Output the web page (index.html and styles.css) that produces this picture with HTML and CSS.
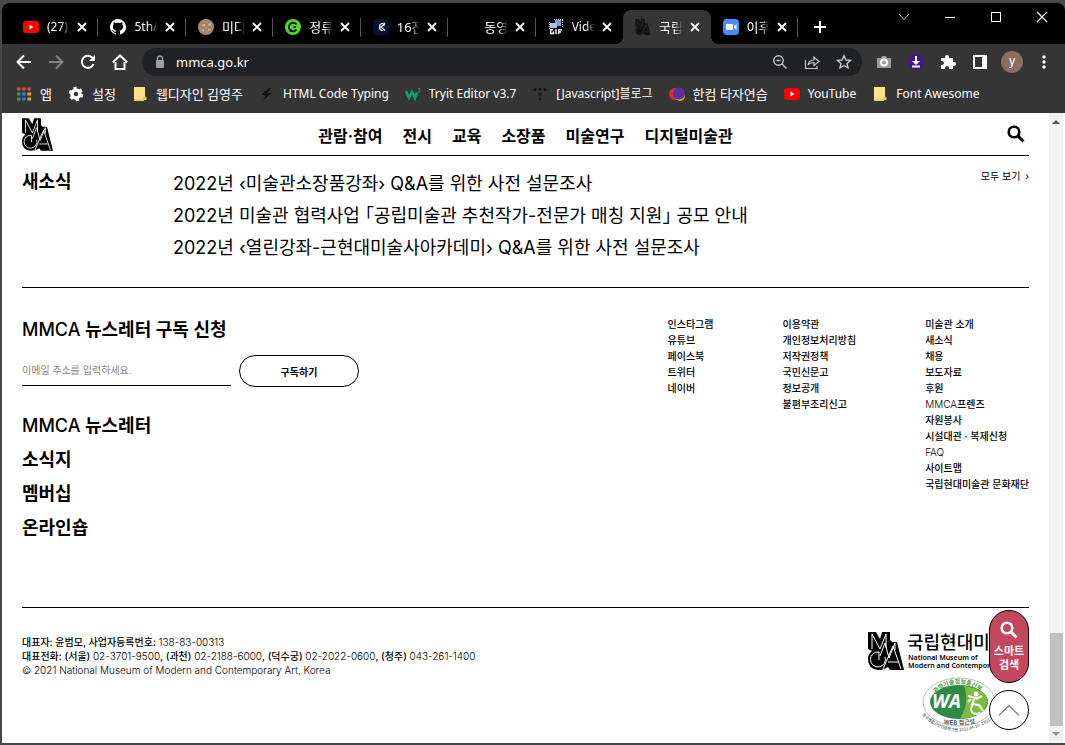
FILE: index.html
```
<!DOCTYPE html>
<html lang="ko">
<head>
<meta charset="utf-8">
<title>국립현대미술관</title>
<link rel="stylesheet" href="styles.css">
</head>
<body>
<svg class="defs" aria-hidden="true">
  <symbol id="mmca" viewBox="0 0 36 38">
    <g fill="none" stroke-linejoin="miter">
      <path d="M0 0H8L12 7L14 0H22V8L24 10H29L36 38H22L20 35Q16 38 10 38Q0 37 0 27Q0 22 4 19L0 17Z" fill="currentColor"/>
      <g class="mmca-lines" stroke-width="1">
        <path d="M4 17V2L12 17L18 2V16"/>
        <path d="M12 24L17 11L21 26L27 11V18"/>
        <path d="M17 25A7.500 7.500 0 1 1 11 20V28"/>
        <path d="M15 37L25 14L33 37M20 30H30"/>
      </g>
    </g>
  </symbol>
  <symbol id="youtube" viewBox="0 0 16 16"><rect y="2" width="16" height="12" rx="3" fill="#f00"/><path d="M6.500 5.500V10.500L10.500 8Z" fill="#fff"/></symbol>
  <symbol id="folder" viewBox="0 0 16 16"><path d="M2 1H13V11L14 12V14H12V15H2Z" fill="#ffe28a"/><path d="M2 14H12V11H14V14" fill="none" stroke="#e5b93c"/></symbol>
  <symbol id="close" viewBox="0 0 16 16"><path d="M4 4L12 12M12 4L4 12" stroke="#fff" stroke-width="1.800"/></symbol>
  <symbol id="magnifier" viewBox="0 0 18 18"><circle cx="7" cy="7" r="5.300" fill="none" stroke="currentColor" stroke-width="2.600"/><path d="M11 11L16.500 16.500" stroke="currentColor" stroke-width="3"/></symbol>
</svg>

<div class="window">
  <header class="tabstrip">
    <nav class="tabs" aria-label="탭">
      <div class="tab"><svg class="icon"><use href="#youtube"/></svg><span class="tab-title">(27)&nbsp;YouTube</span><button class="tab-close" aria-label="닫기"><svg class="icon"><use href="#close"/></svg></button></div>
      <div class="tab"><svg class="icon" viewBox="0 0 16 16"><path fill="#fff" d="M8 0a8 8 0 0 0-2.500 15.600c.4.100.5-.2.500-.4v-1.400c-2.200.5-2.700-1-2.700-1-.4-.9-.9-1.200-.9-1.200-.7-.5.100-.5.100-.5.800.1 1.200.8 1.200.8.700 1.300 1.900.9 2.300.7.100-.5.300-.9.500-1.100-1.800-.2-3.600-.9-3.600-4 0-.9.300-1.600.8-2.100-.1-.2-.4-1 .1-2.100 0 0 .7-.2 2.200.8a7.500 7.500 0 0 1 4 0c1.500-1 2.200-.8 2.200-.8.400 1.100.2 1.900.1 2.100.5.600.8 1.300.8 2.100 0 3.100-1.900 3.800-3.700 4 .3.300.6.800.6 1.500v2.200c0 .2.100.5.500.4A8 8 0 0 0 8 0Z"/></svg><span class="tab-title">5th/inte</span><button class="tab-close" aria-label="닫기"><svg class="icon"><use href="#close"/></svg></button></div>
      <div class="tab"><svg class="icon" viewBox="0 0 16 16"><circle cx="8" cy="8" r="8" fill="#a68b72"/><path d="M3 6Q8 2 8 7Q4 9 3 6M9 6Q13 1 14 5Q12 9 9 6M3 11Q7 7 7 12Q5 15 3 11M9 10Q14 7 13 12Q10 14 9 10" fill="#cbb59b" stroke="#80664f" stroke-width=".6"/></svg><span class="tab-title ko">미디어쿼리</span><button class="tab-close" aria-label="닫기"><svg class="icon"><use href="#close"/></svg></button></div>
      <div class="tab"><svg class="icon" viewBox="0 0 16 16"><circle cx="8" cy="8" r="8" fill="#58d62d"/><path d="M5.500 13V10M11.500 10.500A4.200 4.200 0 1 1 11.500 5.500M11 8H8.500" fill="none" stroke="#0c1c08" stroke-width="2"/></svg><span class="tab-title ko">정류장</span><button class="tab-close" aria-label="닫기"><svg class="icon"><use href="#close"/></svg></button></div>
      <div class="tab"><svg class="icon" viewBox="0 0 16 16"><rect width="16" height="16" rx="2" fill="#04122b"/><path d="M12 4.500L8 8L12 11.500M10 4.500A3.500 3.500 0 1 0 10 11.500M11 3.500V7" fill="none" stroke="#fff" stroke-width="1.200"/></svg><span class="tab-title ko">16진수</span><button class="tab-close" aria-label="닫기"><svg class="icon"><use href="#close"/></svg></button></div>
      <div class="tab"><svg class="icon"></svg><span class="tab-title ko">동영상</span><button class="tab-close" aria-label="닫기"><svg class="icon"><use href="#close"/></svg></button></div>
      <div class="tab no-line"><svg class="icon" viewBox="0 0 16 16"><rect x="7" y="1" width="6" height="6" fill="#7f9de0"/><rect x="2" y="4" width="7" height="5" fill="#aabdf0"/><path d="M6 .5H15M1.500 3V10M14.500 1V9" stroke="#fff" stroke-dasharray="1 1"/><path d="M5 10.700H2.700V14.500H5.500V12.500M8 10V15.200M10.700 15.200V10.700H14M10.700 13H13" fill="none" stroke="#fff" stroke-width="1.400"/></svg><span class="tab-title">Video to</span><button class="tab-close" aria-label="닫기"><svg class="icon"><use href="#close"/></svg></button></div>
      <div class="tab active"><svg class="icon tab-mmca"><use href="#mmca"/></svg><span class="tab-title ko">국립현대</span><button class="tab-close" aria-label="닫기"><svg class="icon"><use href="#close"/></svg></button></div>
      <div class="tab"><svg class="icon" viewBox="0 0 16 16"><rect width="16" height="16" rx="4" fill="#4a8cff"/><path d="M3 5H9Q10 5 10 6V11H4Q3 11 3 10ZM11 7L13.500 5V11L11 9Z" fill="#fff"/></svg><span class="tab-title ko">이후</span><button class="tab-close" aria-label="닫기"><svg class="icon"><use href="#close"/></svg></button></div>
    </nav>
    <button class="new-tab" aria-label="새 탭"><svg class="icon" viewBox="0 0 16 16"><path d="M8 2V14M2 8H14" stroke="#fff" stroke-width="2"/></svg></button>
    <div class="window-controls">
      <button aria-label="탭 검색"><svg class="icon" viewBox="0 0 16 16"><path d="M3 5L8 10.500L13 5" fill="none" stroke="#ccc"/></svg></button>
      <button aria-label="최소화"><svg class="icon" viewBox="0 0 16 16"><path d="M3 8.500H13" stroke="#fff"/></svg></button>
      <button aria-label="최대화"><svg class="icon" viewBox="0 0 16 16"><rect x="3.500" y="3.500" width="9" height="9" fill="none" stroke="#fff"/></svg></button>
      <button aria-label="창 닫기"><svg class="icon" viewBox="0 0 16 16"><path d="M3 3L13 13M13 3L3 13" stroke="#fff" stroke-width="1.200"/></svg></button>
    </div>
  </header>

  <div class="toolbar">
    <button class="tool" aria-label="뒤로"><svg class="icon" viewBox="0 0 16 16"><path d="M15 8H2M8 1.500L1.500 8L8 14.500" fill="none" stroke="#fff" stroke-width="2"/></svg></button>
    <button class="tool" aria-label="앞으로"><svg class="icon" viewBox="0 0 16 16"><path d="M1 8H14M8 1.500L14.500 8L8 14.500" fill="none" stroke="#858585" stroke-width="2"/></svg></button>
    <button class="tool" aria-label="새로고침"><svg class="icon" viewBox="0 0 16 16"><path d="M13.500 10A6 6 0 1 1 12.500 4" fill="none" stroke="#fff" stroke-width="2"/><path d="M15 1V7H9Z" fill="#fff"/></svg></button>
    <button class="tool" aria-label="홈"><svg class="icon" viewBox="0 0 16 16"><path d="M3.500 8V15H12.500V8M.8 8.500L8 1.500L15.200 8.500" fill="none" stroke="#fff" stroke-width="2"/></svg></button>
    <div class="omnibox">
      <svg class="icon" viewBox="0 0 16 16"><rect x="4" y="6" width="8" height="8" rx="1" fill="#9aa0a6"/><path d="M5.500 7V4.500a2.500 2.500 0 0 1 5 0V7" fill="none" stroke="#9aa0a6" stroke-width="1.400"/></svg>
      <input class="address" aria-label="주소창" value="mmca.go.kr">
      <button class="tool" aria-label="축소"><svg class="icon" viewBox="0 0 16 16"><circle cx="6.500" cy="6.500" r="4.700" fill="none" stroke="#c4c7ca" stroke-width="1.400"/><path d="M4.500 6.500H8.500M10 10L14.500 14.500" stroke="#c4c7ca" stroke-width="1.400"/></svg></button>
      <button class="tool" aria-label="공유"><svg class="icon" viewBox="0 0 16 16"><path d="M1.500 6V14.500H13V12M4 11Q5 6 10 6V3L15 7.500L10 11.500V8.500Q6 8.500 4 11Z" fill="none" stroke="#c4c7ca" stroke-width="1.200"/></svg></button>
      <button class="tool" aria-label="북마크"><svg class="icon" viewBox="0 0 16 16"><path d="M8 1.800L9.900 6L14.400 6.400L11 9.400L12 13.800L8 11.500L4 13.800L5 9.400L1.600 6.400L6.100 6Z" fill="none" stroke="#c4c7ca" stroke-width="1.400"/></svg></button>
    </div>
    <button class="tool" aria-label="캡처"><svg class="icon" viewBox="0 0 16 16"><path d="M1 4H5L6 2H10L11 4H15V14H1Z" fill="#9c9c9c"/><circle cx="8" cy="8.500" r="3" fill="none" stroke="#fff" stroke-width="2"/></svg></button>
    <button class="tool" aria-label="다운로드"><svg class="icon" viewBox="0 0 16 16"><circle cx="8" cy="8" r="8" fill="#42178c"/><path d="M8 2V8M4 12.500H12" stroke="#fff" stroke-width="2"/><path d="M4 7H12L8 11Z" fill="#fff"/></svg></button>
    <button class="tool" aria-label="확장 프로그램"><svg class="icon" viewBox="0 0 16 16"><path d="M1 4H5V3A2 2 0 0 1 9 3V4H13V8H14A2 2 0 0 1 14 12H13V15H9V14A2 2 0 0 0 5 14V15H1V11H2A2 2 0 0 0 2 7H1Z" fill="#fff"/></svg></button>
    <button class="tool" aria-label="사이드 패널"><svg class="icon" viewBox="0 0 16 16"><path d="M1 1H15V15H1ZM3 3V13H10V3Z" fill="#fff" fill-rule="evenodd"/></svg></button>
    <button class="tool" aria-label="프로필"><span class="avatar">y</span></button>
    <button class="tool" aria-label="메뉴"><svg class="icon" viewBox="0 0 16 16"><g fill="#fff"><circle cx="8" cy="3" r="1.700"/><circle cx="8" cy="8" r="1.700"/><circle cx="8" cy="13" r="1.700"/></g></svg></button>
  </div>

  <nav class="bookmarks" aria-label="북마크">
    <a class="ko" href="#"><svg class="icon" viewBox="0 0 16 16"><path d="M1 3H15" stroke="#e8453c" stroke-width="3" stroke-dasharray="3.500 1.700"/><path d="M1 8H4.500M1 13H4.500" stroke="#2c9f5c" stroke-width="3"/><path d="M6.200 8H9.700M6.200 13H9.700" stroke="#2e7df0" stroke-width="3"/><path d="M11.400 8H15M11.400 13H15" stroke="#f5a90c" stroke-width="3"/></svg>앱</a>
    <a class="ko" href="#"><svg class="icon" viewBox="0 0 16 16"><circle cx="8" cy="8" r="4" fill="none" stroke="#fff" stroke-width="3.500"/><circle cx="8" cy="8" r="6" fill="none" stroke="#fff" stroke-width="2.500" stroke-dasharray="3.140 3.140"/></svg>설정</a>
    <a class="ko" href="#"><svg class="icon"><use href="#folder"/></svg>웹디자인 김영주</a>
    <a href="#"><svg class="icon" viewBox="0 0 16 16"><path d="M10 2L2 9H7L4 14L13 7H8L12 2Z" fill="#111"/></svg>HTML Code Typing</a>
    <a href="#"><svg class="icon" viewBox="0 0 16 16"><path d="M1 5L4 12L7 6L10 12L12 6.500" fill="none" stroke="#0aa06e" stroke-width="2.600"/><path d="M13 2.500H15L14 4.500L15 5.500L13 6.500" fill="none" stroke="#0aa06e"/></svg>Tryit Editor v3.7</a>
    <a href="#"><svg class="icon" viewBox="0 0 16 16"><g fill="#111"><circle cx="3" cy="3.500" r="1.500"/><circle cx="8" cy="3.500" r="1.500"/><circle cx="13" cy="3.500" r="1.500"/><circle cx="8" cy="8" r="1.500"/><circle cx="8" cy="13" r="1.500"/></g></svg>[Javascript]블로그</a>
    <a class="ko" href="#"><svg class="icon" viewBox="0 0 16 16"><circle cx="6" cy="8" r="6" fill="#e3253b"/><circle cx="11" cy="10" r="5" fill="#f89b1c"/><circle cx="10" cy="7.500" r="6" fill="#56339b"/></svg>한컴 타자연습</a>
    <a href="#"><svg class="icon"><use href="#youtube"/></svg>YouTube</a>
    <a href="#"><svg class="icon"><use href="#folder"/></svg>Font Awesome</a>
  </nav>

  <div class="viewport">
    <main class="page">
      <header class="site-header">
        <a class="site-logo" href="#" aria-label="MMCA"><svg><use href="#mmca"/></svg></a>
        <nav class="site-nav">
          <a href="#">관람·참여</a><a href="#">전시</a><a href="#">교육</a><a href="#">소장품</a><a href="#">미술연구</a><a href="#">디지털미술관</a>
        </nav>
        <button class="site-search" aria-label="검색"><svg><use href="#magnifier"/></svg></button>
      </header>

      <section class="news">
        <h2>새소식</h2>
        <ul>
          <li><a href="#">2022년 ‹미술관소장품강좌› Q&amp;A를 위한 사전 설문조사</a></li>
          <li><a href="#">2022년 미술관 협력사업 「공립미술관 추천작가-전문가 매칭 지원」 공모 안내</a></li>
          <li><a href="#">2022년 ‹열린강좌-근현대미술사아카데미› Q&amp;A를 위한 사전 설문조사</a></li>
        </ul>
        <a class="more" href="#">모두 보기 <span>›</span></a>
      </section>

      <section class="directory">
        <div>
          <form class="newsletter">
            <h2><label for="email"><span class="medium">MMCA</span> 뉴스레터 구독 신청</label></h2>
            <div class="subscribe">
              <input id="email" type="email" placeholder="이메일 주소를 입력하세요.">
              <button type="button">구독하기</button>
            </div>
          </form>
          <ul class="services">
            <li><a href="#"><span class="medium">MMCA</span> 뉴스레터</a></li>
            <li><a href="#">소식지</a></li>
            <li><a href="#">멤버십</a></li>
            <li><a href="#">온라인숍</a></li>
          </ul>
        </div>
        <div class="link-columns">
          <ul><li><a href="#">인스타그램</a></li><li><a href="#">유튜브</a></li><li><a href="#">페이스북</a></li><li><a href="#">트위터</a></li><li><a href="#">네이버</a></li></ul>
          <ul><li><a href="#">이용약관</a></li><li><a href="#">개인정보처리방침</a></li><li><a href="#">저작권정책</a></li><li><a href="#">국민신문고</a></li><li><a href="#">정보공개</a></li><li><a href="#">불편부조리신고</a></li></ul>
          <ul><li><a href="#">미술관 소개</a></li><li><a href="#">새소식</a></li><li><a href="#">채용</a></li><li><a href="#">보도자료</a></li><li><a href="#">후원</a></li><li><a href="#"><span class="light">MMCA</span>프렌즈</a></li><li><a href="#">자원봉사</a></li><li><a href="#">시설대관 · 복제신청</a></li><li><a class="light" href="#">FAQ</a></li><li><a href="#">사이트맵</a></li><li><a href="#">국립현대미술관 문화재단</a></li></ul>
        </div>
      </section>

      <footer class="site-footer">
        <address>대표자: 윤범모, 사업자등록번호: <span class="light">138-83-00313</span><br>대표전화: (서울) <span class="light">02-3701-9500</span>, (과천) <span class="light">02-2188-6000</span>, (덕수궁) <span class="light">02-2022-0600</span>, (청주) <span class="light">043-261-1400</span><br><span class="light">© 2021 National Museum of Modern and Contemporary Art, Korea</span></address>
        <div class="marks">
          <div class="museum-mark">
            <svg><use href="#mmca"/></svg>
            <div><strong>국립현대미술관</strong><small>National Museum of</small><small>Modern and Contemporary Art, Korea</small></div>
          </div>
          <svg class="wa-mark" viewBox="0 0 76 56" role="img" aria-label="웹 접근성">
            <path id="arc-top" d="M11 19Q38 -7 68 21" fill="none"/>
            <path id="arc-bottom" d="M1 38Q34 70 76 39" fill="none"/>
            <path id="arc-web" d="M15 45Q38 51 63 44" fill="none"/>
            <ellipse cx="38" cy="25" rx="36" ry="24" fill="#fff" stroke="#b9c2b9"/>
            <ellipse cx="38" cy="25" rx="29" ry="17" fill="#2f8b45"/>
            <path d="M43 9Q66 12 66 25Q65 37 46 41L39 41Q49 27 43 9Z" fill="#7dbd3d"/>
            <text class="wa-letters" x="11" y="31">WA</text>
            <g fill="none" stroke="#fff" stroke-width="2"><path d="M47 19L54 21L51 27L58 28L62 34M47 25L50 22M55 22L61 19"/><path d="M52 28A5 5 0 1 0 59 35"/></g><circle cx="55" cy="17" r="2.500" fill="#fff"/>
            <text class="wa-top"><textPath href="#arc-top" startOffset="4">과학기술정보통신부</textPath></text>
            <text class="wa-web"><textPath href="#arc-web" startOffset="8">WEB 접근성</textPath></text>
            <text class="wa-bottom"><textPath href="#arc-bottom">한국웹접근성인증평가원 2021.04.15~2022</textPath></text>
          </svg>
        </div>
      </footer>
      <div class="floating">
        <button class="smart-search"><svg><use href="#magnifier"/></svg><span>스마트<br>검색</span></button>
        <button class="to-top" aria-label="맨 위로"><svg viewBox="0 0 24 24"><path d="M1 18L12 7L23 18" fill="none" stroke="#888" stroke-width="1.500"/></svg></button>
      </div>
    </main>
    <div class="scrollbar" aria-hidden="true"><i class="arrow up"></i><i class="thumb"></i><i class="arrow down"></i></div>
  </div>
</div>
</body>
</html>
```
FILE: styles.css
```
* { box-sizing: border-box; }
body {
  margin: 0;
  min-height: 100vh;
  display: flex;
  padding: 3px 0 2px 2px;
  background: #484848;
  font-family: "Noto Sans", "Noto Sans CJK KR", sans-serif;
}
ul { list-style: none; margin: 0; padding: 0; }
h2 { margin: 0; }
a { color: inherit; text-decoration: none; }
button { font: inherit; color: inherit; margin: 0; padding: 0; border: 0; background: none; }
input { min-width: 0; }
.defs { position: absolute; width: 0; height: 0; }
.icon { width: 16px; height: 16px; flex: none; display: block; }
.mmca-lines { stroke: var(--mmca-line, #fff); }
.medium { font-weight: 500; }
.light { font-weight: 300; }

.window { flex: 1; min-width: 0; display: flex; flex-direction: column; border-radius: 8px 8px 0 0; overflow: hidden; background: #353535; }

.tabstrip { display: flex; align-items: flex-start; height: 41px; background: #000; color: #fff; padding-left: 9px; }
.tabs { display: flex; flex: 0 1 787px; min-width: 0; padding-top: 7px; }
.tab { flex: 1 1 0; min-width: 0; height: 34px; position: relative; display: flex; align-items: center; gap: 8px; padding: 0 8px 0 12px; }
.tab::after { content: ""; position: absolute; right: 0; top: 8px; width: 1px; height: 19px; background: #555; }
.tab.active::after, .tab.no-line::after { display: none; }
.tab.active { background: #353535; border-radius: 8px 8px 0 0; }
.tab.active::before { content: ""; position: absolute; left: -8px; right: -8px; bottom: 0; height: 8px; background: radial-gradient(circle at 0 0, transparent 8px, #353535 8px) left / 8px 8px no-repeat, radial-gradient(circle at 100% 0, transparent 8px, #353535 8px) right / 8px 8px no-repeat; }
.tab-title { flex: 1; min-width: 0; margin-right: -4px; overflow: hidden; white-space: nowrap; font-size: 12px; line-height: 18px; -webkit-mask-image: linear-gradient(90deg, #000 60%, transparent); mask-image: linear-gradient(90deg, #000 60%, transparent); }
.tab-title.ko { font-size: 13px; }
.tab-mmca { color: #111; --mmca-line: #353535; }
.new-tab { margin: 16px 0 0 14px; }
.window-controls { margin-left: auto; display: flex; }
.window-controls button { width: 46px; height: 27px; display: grid; place-items: center; }

.toolbar { display: flex; align-items: center; height: 36px; padding: 0 5px 0 6px; }
.tool { width: 32px; height: 28px; flex: none; display: grid; place-items: center; }
.omnibox { flex: 1; min-width: 0; height: 28px; margin: 0 6px; padding: 0 2px 0 10px; display: flex; align-items: center; gap: 8px; border-radius: 14px; background: #202124; }
.omnibox .tool { margin-left: -8px; }
.address { flex: 1; border: 0; padding: 0; background: none; color: #fff; font: 13px "Noto Sans", sans-serif; outline: 0; }
.avatar { width: 22px; height: 22px; border-radius: 50%; background: #8d6e63; color: #fff; font-size: 12px; line-height: 20px; text-align: center; }

.bookmarks { display: flex; gap: 16px; height: 33px; padding: 0 0 6px 14px; align-items: center; color: #fff; font-size: 12px; white-space: nowrap; overflow: hidden; }
.bookmarks a { display: flex; align-items: center; gap: 8px; line-height: 20px; }
.bookmarks .ko { font-size: 13px; }

.viewport { flex: 1; display: flex; min-height: 0; background: #fff; }
.page { flex: 1; min-width: 0; position: relative; padding: 0 20px; color: #000; font-family: Inter, "Noto Sans CJK KR", sans-serif; }
.scrollbar { width: 14px; margin-right: 2px; display: flex; flex-direction: column; align-items: center; background: #f1f1f1; padding: 7px 0; }
.arrow { border: 4px solid transparent; }
.up { border-top: 0; border-bottom-color: #505050; margin-bottom: auto; }
.down { border-bottom: 0; border-top-color: #909090; margin-top: 6px; }
.thumb { width: 13px; height: 93px; background: #c1c1c1; }

.site-header { height: 43px; display: grid; grid-template-columns: 1fr auto 1fr; align-items: center; border-bottom: 1px solid #000; }
.site-logo svg { display: block; width: 31px; height: 33px; }
.site-nav { display: flex; gap: 20px; font-size: 16px; line-height: 24px; font-weight: 700; padding-top: 3px; }
.site-search { justify-self: end; margin-right: 4px; }
.site-search svg { display: block; width: 18px; height: 18px; }

.news { display: grid; grid-template-columns: 151px 1fr auto; padding: 12px 0 23px; border-bottom: 1px solid #000; }
.news h2, .newsletter h2 { font-size: 18px; line-height: 28px; font-weight: 600; }
.news ul { font-size: 18px; line-height: 32px; font-feature-settings: "halt"; }
.more { font-size: 10px; line-height: 16px; }
.more span { margin-left: 2px; }

.directory { display: flex; justify-content: space-between; min-height: 320px; padding: 28px 0; border-bottom: 1px solid #000; }
.subscribe { display: flex; gap: 8px; align-items: flex-start; margin-top: 11px; }
.subscribe input { width: 209px; height: 31px; border: 0; border-bottom: 1px solid #000; padding: 0; outline: 0; background: none; font: 10px Inter, "Noto Sans CJK KR", sans-serif; }
.subscribe input::placeholder { color: #888; opacity: 1; }
.subscribe button { width: 120px; height: 32px; border: 1px solid #000; border-radius: 16px; font-size: 10px; font-weight: 700; }
.services { margin-top: 22px; font-size: 18px; line-height: 34px; font-weight: 600; }
.link-columns { display: flex; font-size: 10px; line-height: 16px; font-weight: 500; white-space: nowrap; }
.link-columns ul + ul { margin-left: 69px; }

.site-footer { display: flex; justify-content: space-between; padding-top: 24px; }
address { font-style: normal; font-size: 10px; line-height: 14px; font-weight: 500; margin-top: 3px; }
.marks { width: 161px; }
.museum-mark { display: flex; gap: 3px; overflow: hidden; }
.museum-mark svg { width: 36px; height: 38px; flex: none; }
.museum-mark strong { display: block; font-size: 18px; line-height: 22px; font-weight: 500; white-space: nowrap; }
.museum-mark small { display: block; font: 600 7px/8px "Noto Sans", sans-serif; white-space: nowrap; margin-left: 1px; }
.wa-mark { display: block; width: 76px; height: 56px; margin: 7px 0 0 53px; }
.wa-letters { font: italic 700 19px "Open Sans", sans-serif; fill: #fff; }
.wa-top { font: 700 6px "Noto Sans CJK KR", sans-serif; fill: #4d9656; }
.wa-web { font: 700 6px "Noto Sans CJK KR", sans-serif; fill: #555; }
.wa-bottom { font: 700 4px "Noto Sans CJK KR", sans-serif; fill: #777; }

.floating { position: absolute; right: 20px; bottom: 13px; display: grid; gap: 7px; width: 40px; }
.smart-search { height: 73px; display: flex; flex-direction: column; align-items: center; gap: 5px; padding-top: 10px; border: 1px solid #000; border-radius: 20px; background: #c5465f; color: #fff; font-size: 11px; line-height: 14px; font-weight: 700; }
.smart-search svg { width: 18px; height: 18px; flex: none; }
.to-top { height: 40px; display: grid; place-items: center; border: 1px solid #000; border-radius: 50%; background: #fff; }
.to-top svg { width: 22px; height: 22px; }
```
